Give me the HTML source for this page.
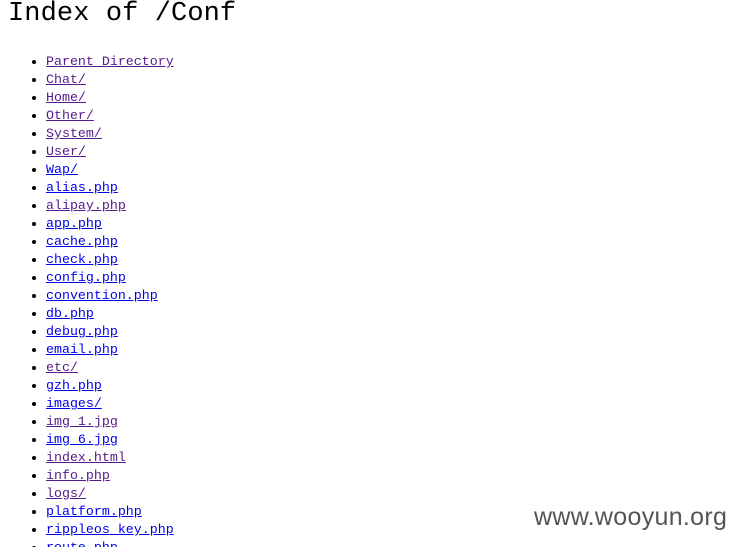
<!DOCTYPE html>
<html><head><meta charset="utf-8"><style>
html,body{margin:0;padding:0;background:#fff;width:740px;height:547px;overflow:hidden;position:relative}
h1{position:absolute;left:8px;top:-6px;margin:0;font:normal 27px/40px "Liberation Mono",monospace;color:#000;letter-spacing:0.1px}
ul{position:absolute;left:0;top:53px;margin:0;padding:0 0 0 46px;font:13.3px/18px "Liberation Mono",monospace}
li{height:18px}
a{color:#0000ee;text-decoration:underline}
a.v{color:#551a8b}
.wm{position:absolute;left:534px;top:503px;font:25px "Liberation Sans",sans-serif;color:#555;letter-spacing:0.3px}
</style></head><body>
<h1>Index of /Conf</h1>
<ul>
<li><a class="v">Parent Directory</a></li>
<li><a class="v">Chat/</a></li>
<li><a class="v">Home/</a></li>
<li><a class="v">Other/</a></li>
<li><a class="v">System/</a></li>
<li><a class="v">User/</a></li>
<li><a>Wap/</a></li>
<li><a>alias.php</a></li>
<li><a class="v">alipay.php</a></li>
<li><a>app.php</a></li>
<li><a>cache.php</a></li>
<li><a>check.php</a></li>
<li><a>config.php</a></li>
<li><a>convention.php</a></li>
<li><a>db.php</a></li>
<li><a>debug.php</a></li>
<li><a>email.php</a></li>
<li><a class="v">etc/</a></li>
<li><a>gzh.php</a></li>
<li><a>images/</a></li>
<li><a class="v">img_1.jpg</a></li>
<li><a>img_6.jpg</a></li>
<li><a class="v">index.html</a></li>
<li><a class="v">info.php</a></li>
<li><a class="v">logs/</a></li>
<li><a>platform.php</a></li>
<li><a>rippleos_key.php</a></li>
<li><a>route.php</a></li>
</ul>
<div class="wm">www.wooyun.org</div>
</body></html>
